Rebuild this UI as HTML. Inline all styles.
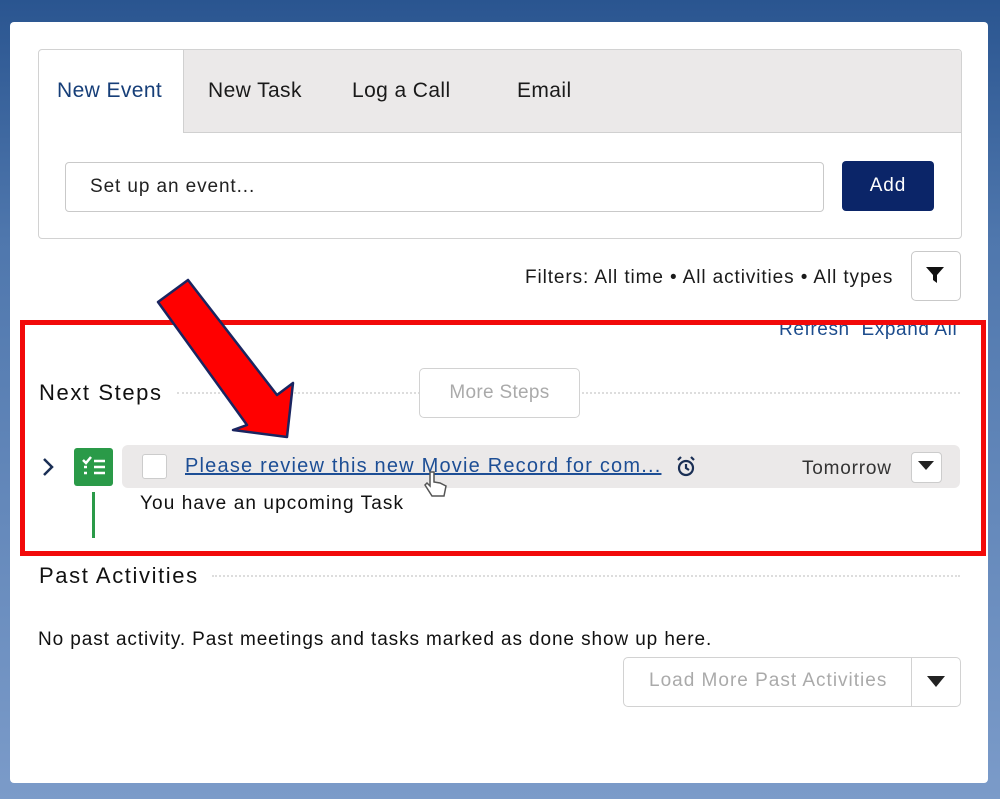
<!DOCTYPE html>
<html><head><style>
body{margin:0;width:1000px;height:799px;overflow:hidden;background:linear-gradient(#2a5590 0%,#4f77ad 30%,#7b9bc9 100%);font-family:"Liberation Sans",sans-serif;position:relative;letter-spacing:0.9px}
.a{position:absolute;white-space:nowrap}
.card{left:10px;top:22px;width:978px;height:761px;background:#fff;border-radius:4px}
.t{font-size:21px;color:#1a1a1a;letter-spacing:0.4px}
</style></head><body>
<div class="a card"></div>
<div class="a" style="left:38px;top:49px;width:922px;height:188px;border:1px solid #d2d2d2;border-radius:4px;background:#fff"></div>
<div class="a" style="left:183px;top:50px;width:777px;height:82px;background:#ebe9e9;border-bottom:1px solid #d0d0d0;border-left:1px solid #d0d0d0;border-radius:0 4px 0 0"></div>
<div class="a t" style="left:57px;top:79px;color:#163e78">New Event</div>
<div class="a t" style="left:208px;top:79px">New Task</div>
<div class="a t" style="left:352px;top:79px">Log a Call</div>
<div class="a t" style="left:517px;top:79px">Email</div>
<div class="a" style="left:65px;top:162px;width:757px;height:48px;border:1px solid #c9c9c9;border-radius:4px"></div>
<div class="a" style="left:90px;top:176px;font-size:19px;color:#222">Set up an event...</div>
<div class="a" style="left:842px;top:161px;width:92px;height:50px;background:#0b2568;border-radius:4px;color:#fff;font-size:19px;text-align:center;line-height:50px">Add</div>
<div class="a" style="left:525px;top:267px;font-size:19px;color:#1a1a1a">Filters: All time • All activities • All types</div>
<div class="a" style="left:911px;top:251px;width:48px;height:48px;border:1px solid #c9c9c9;border-radius:5px"></div>
<svg class="a" style="left:925px;top:265px" width="20" height="20"><path d="M1 2H19L12 10V18L8 15V10Z" fill="#111"/></svg>
<div class="a" style="left:779px;top:319px;font-size:19px;color:#1d4c8c;letter-spacing:0.6px">Refresh&nbsp; Expand All</div>
<div class="a" style="left:20px;top:320px;width:956px;height:226px;border:5px solid #f20a0a"></div>
<div class="a" style="left:39px;top:380px;font-size:22px;color:#111;letter-spacing:1.6px">Next Steps</div>
<div class="a" style="left:177px;top:392px;width:783px;border-top:2px dotted #ddd"></div>
<div class="a" style="left:419px;top:368px;width:159px;height:48px;border:1px solid #d2d2d2;border-radius:5px;background:#fff;color:#aaa;font-size:19px;text-align:center;line-height:48px;letter-spacing:0.3px">More Steps</div>
<div class="a" style="left:122px;top:445px;width:838px;height:43px;background:#ebe9e9;border-radius:6px"></div>
<svg class="a" style="left:40px;top:456px" width="16" height="22"><path d="M4 3L12 11L4 19" stroke="#1a2f55" stroke-width="2.5" fill="none"/></svg>
<div class="a" style="left:74px;top:448px;width:39px;height:38px;background:#2a9a48;border-radius:3px"></div>
<svg class="a" style="left:80px;top:454px" width="28" height="26" stroke="#fff" stroke-width="2.5" fill="none"><path d="M3 6L6 9L11 3"/><path d="M14 7H25M14 13H25M14 19H25M4 13H7M4 19H7"/></svg>
<div class="a" style="left:92px;top:492px;width:3px;height:46px;background:#2a9a48"></div>
<div class="a" style="left:142px;top:454px;width:23px;height:23px;border:1px solid #ccc;border-radius:3px;background:#fff"></div>
<div class="a" style="left:185px;top:455px;font-size:20px;color:#1d4e95;text-decoration:underline;letter-spacing:1.2px">Please review this new Movie Record for com...</div>
<svg class="a" style="left:675px;top:455px" width="22" height="24" stroke="#1a2f55" stroke-width="2.2" fill="none"><circle cx="11" cy="13" r="7"/><path d="M11 9V13L14 15M3 5L6 2M19 5L16 2"/></svg>
<div class="a" style="left:802px;top:458px;font-size:19px;color:#333;letter-spacing:0.8px">Tomorrow</div>
<div class="a" style="left:911px;top:452px;width:29px;height:29px;border:1px solid #ccc;border-radius:4px;background:#fff"></div>
<svg class="a" style="left:917px;top:460px" width="18" height="12"><path d="M1 1H17L9 10Z" fill="#222"/></svg>
<div class="a" style="left:140px;top:493px;font-size:19px;color:#111;letter-spacing:1.1px">You have an upcoming Task</div>
<svg class="a" style="left:422px;top:470px" width="28" height="30"><path d="M8 2V16L5 13L3 15L10 26H22L24 16L18 13L12 12V2Z" fill="#fff" stroke="#555" stroke-width="1.5"/></svg>
<svg class="a" style="left:0;top:0" width="1000" height="799"><path d="M158 302L188 280L277 395L293 383L287 437L233 430L247 425Z" fill="#f00" stroke="#1a2560" stroke-width="2.5" stroke-linejoin="round"/></svg>
<div class="a" style="left:39px;top:563px;font-size:22px;color:#111;letter-spacing:1.6px">Past Activities</div>
<div class="a" style="left:212px;top:575px;width:748px;border-top:2px dotted #ddd"></div>
<div class="a" style="left:38px;top:629px;font-size:19px;color:#111">No past activity. Past meetings and tasks marked as done show up here.</div>
<div class="a" style="left:623px;top:657px;width:336px;height:48px;border:1px solid #d2d2d2;border-radius:5px"></div>
<div class="a" style="left:911px;top:658px;height:48px;border-left:1px solid #d2d2d2"></div>
<div class="a" style="left:649px;top:670px;font-size:19px;color:#aaa;letter-spacing:1px">Load More Past Activities</div>
<svg class="a" style="left:926px;top:675px" width="20" height="14"><path d="M1 1H19L10 12Z" fill="#222"/></svg>
</body></html>
